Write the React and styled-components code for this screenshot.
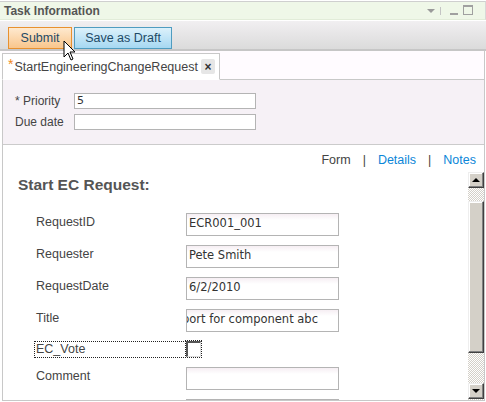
import React from 'react'
import styled, { createGlobalStyle } from 'styled-components';

const GlobalStyle = createGlobalStyle`
    html, body {
        margin: 0;
        padding: 0;
        background: #fff;
    }
    body {
        font-family: "Liberation Sans", Arial, sans-serif;
        font-size: 12px;
        color: #444;
    }
`;

const Portlet = styled.div`
    position: relative;
    width: 486px;
    height: 402px;
    overflow: hidden;
    padding-top: 1px;
    box-sizing: border-box;
`;

const TitleBar = styled.div`
    height: 19px;
    box-sizing: border-box;
    border-top: 1px solid #cfcfcf;
    border-right: 1px solid #d8d8d8;
    border-bottom: 1px solid #e2ecd9;
    background: #eff7e8;
    display: flex;
    align-items: center;
    padding: 0 12px 0 4px;
    margin-bottom: 1px;
`;

const Title = styled.div`
    flex: 1;
    font-weight: bold;
    color: #555;
    font-size: 12px;
`;

const WinIcons = styled.div`
    display: flex;
    align-items: center;
    gap: 5px;
`;

const Caret = styled.span`
    width: 0;
    height: 0;
    border-left: 4px solid transparent;
    border-right: 4px solid transparent;
    border-top: 4px solid #9a9a9a;
`;

const Sep = styled.span`
    width: 1px;
    height: 8px;
    background: #c4c4c4;
    margin-right: 4px;
`;

const MinIcon = styled.span`
    width: 8px;
    height: 2px;
    background: #a0a0a0;
    margin-top: 7px;
`;

const MaxIcon = styled.span`
    width: 8px;
    height: 7px;
    border: 1px solid #a0a0a0;
    border-top-width: 2px;
    margin-bottom: 2px;
`;

const Toolbar = styled.div`
    height: 30px;
    box-sizing: border-box;
    background: linear-gradient(#f1eff1, #dbdbdb);
    border-bottom: 2px solid #c6c6c6;
    display: flex;
    align-items: flex-end;
    gap: 2px;
    padding-left: 8px;
`;

const Button = styled.button`
    height: 22px;
    box-sizing: border-box;
    padding: 0;
    white-space: nowrap;
    font-family: "Liberation Sans", Arial, sans-serif;
    font-size: 12.5px;
    color: #1e4a66;
    border: 1px solid ${p => p.$tone === 'orange' ? '#e8912f' : '#4f9cc0'};
    background: ${p => p.$tone === 'orange'
        ? 'linear-gradient(#fee9cf, #f9c68c)'
        : 'linear-gradient(#dcf1fb, #a6d8f2)'};
    width: ${p => p.$w}px;
    cursor: default;
`;

const Frame = styled.div`
    margin-left: 2px;
    border-left: 1px solid #c8c8c8;
    border-right: 1px solid #c8c8c8;
    width: 483px;
    box-sizing: border-box;
`;

const TabStrip = styled.div`
    height: 29px;
    box-sizing: border-box;
    background: #fffbff;
    border-bottom: 1px solid #c8c8c8;
    display: flex;
    align-items: flex-end;
    margin-left: -1px;
`;

const Tab = styled.div`
    height: 27px;
    box-sizing: border-box;
    width: 218px;
    margin-bottom: -1px;
    background: #fff;
    border: 1px solid #c8c8c8;
    border-bottom: 1px solid #fff;
    display: flex;
    align-items: center;
    padding-left: 5px;
    font-size: 12.5px;
    color: #444;
`;

const Star = styled.span`
    color: #f08a1c;
    font-size: 14px;
    align-self: flex-start;
    margin-top: 2px;
    margin-right: 1px;
`;

const CloseBox = styled.span`
    width: 14px;
    height: 15px;
    margin-left: 3px;
    background: #e6e6e6;
    border-radius: 2px;
    display: flex;
    align-items: center;
    justify-content: center;
    color: #333;
    font-weight: bold;
    font-size: 12px;
`;

const HeaderForm = styled.div`
    background: #f6f1f6;
    border-bottom: 1px solid #cbcbcb;
    padding: 13px 0 14px 12px;
    display: grid;
    grid-template-columns: 59px 182px;
    row-gap: 5px;
    align-items: center;
`;

const SmallLabel = styled.div`
    font-size: 12px;
    color: #444;
`;

const SmallInput = styled.div`
    height: 16px;
    box-sizing: border-box;
    border: 1px solid #b4b4b4;
    background: #fff;
    font-family: "DejaVu Sans", Verdana, sans-serif;
    font-size: 11px;
    line-height: 14px;
    padding-left: 2px;
    color: #333;
`;

const Content = styled.div`
    background: #fff;
    border-bottom: 1px solid #c8c8c8;
`;

const NavRow = styled.div`
    height: 27px;
    display: flex;
    justify-content: flex-end;
    align-items: center;
    gap: 12px;
    padding-right: 8px;
    padding-top: 2px;
    box-sizing: border-box;
    font-size: 12.5px;
`;

const NavItem = styled.span`
    color: ${p => p.$active ? '#444' : '#0b86d8'};
`;

const ScrollArea = styled.div`
    height: 228px;
    display: flex;
`;

const ScrollContent = styled.div`
    flex: 1;
    overflow: hidden;
    padding: 4px 0 0 15px;
`;

const Heading = styled.div`
    font-weight: bold;
    font-size: 15.5px;
    color: #555;
    margin-bottom: 19px;
`;

const FormGrid = styled.div`
    display: grid;
    grid-template-columns: 151px 153px;
    row-gap: 9px;
    padding-left: 17px;
`;

const Label = styled.div`
    font-size: 12.5px;
    color: #444;
    padding-top: 2px;
    padding-left: 1px;
    ${p => p.$focused && `
        outline: 1px dotted #222;
        outline-offset: -1px;
        padding-top: 1px;
        height: 17px;
        box-sizing: border-box;
        margin-left: -1px;
        padding-left: 2px;
    `}
`;

const Field = styled.div`
    height: 23px;
    box-sizing: border-box;
    border: 1px solid #b4b4b4;
    background: linear-gradient(#f6eef3, #fff 6px);
    font-family: "DejaVu Sans", Verdana, sans-serif;
    font-size: 11.5px;
    color: #333;
    padding: 0 2px;
    line-height: 19px;
    display: flex;
    white-space: nowrap;
    overflow: hidden;
    justify-content: ${p => p.$end ? 'flex-end' : 'flex-start'};
    padding-right: ${p => p.$end ? '20px' : '2px'};
`;

const CheckBox = styled.div`
    width: 15px;
    height: 16px;
    box-sizing: border-box;
    border: 2px solid #555;
    border-right: 1px solid #ddd;
    border-bottom: 1px solid #ddd;
    background: #fff;
    outline: 1px dotted #222;
`;

const Scrollbar = styled.div`
    width: 16px;
    display: flex;
    flex-direction: column;
    background-color: #eeeae6;
    background-image: conic-gradient(#d4d0c8 25%, #fff 0 50%, #d4d0c8 0 75%, #fff 0);
    background-size: 2px 2px;
`;

const Bevel = styled.div`
    box-sizing: border-box;
    background: #d4d0c8;
    border: 1px solid;
    border-color: #eee #404040 #404040 #eee;
    box-shadow: inset -1px -1px #808080, inset 1px 1px #fff;
`;

const ArrowBtn = styled(Bevel)`
    height: 16px;
    display: flex;
    align-items: center;
    justify-content: center;
`;

const Thumb = styled(Bevel)`
    height: 152px;
    margin: 13px 0 30px;
`;

const Tri = styled.span`
    width: 0;
    height: 0;
    border-left: 4px solid transparent;
    border-right: 4px solid transparent;
    ${p => p.$down ? 'border-top: 4px solid #000;' : 'border-bottom: 4px solid #000;'}
`;

const Pointer = styled.svg`
    position: absolute;
    left: 63px;
    top: 40px;
`;

const rows = [
    { label: 'RequestID', value: 'ECR001_001' },
    { label: 'Requester', value: 'Pete Smith' },
    { label: 'RequestDate', value: '6/2/2010' },
    { label: 'Title', value: 'Report for component abc', end: true },
];

export default function App() {
    return (
        <Portlet>
            <GlobalStyle />
            <TitleBar>
                <Title>Task Information</Title>
                <WinIcons>
                    <Caret />
                    <Sep />
                    <MinIcon />
                    <MaxIcon />
                </WinIcons>
            </TitleBar>
            <Toolbar>
                <Button $tone="orange" $w={64}>Submit</Button>
                <Button $tone="blue" $w={98}>Save as Draft</Button>
            </Toolbar>
            <Frame>
                <TabStrip>
                    <Tab>
                        <Star>*</Star>
                        StartEngineeringChangeRequest
                        <CloseBox>×</CloseBox>
                    </Tab>
                </TabStrip>
                <HeaderForm>
                    <SmallLabel>* Priority</SmallLabel>
                    <SmallInput>5</SmallInput>
                    <SmallLabel>Due date</SmallLabel>
                    <SmallInput />
                </HeaderForm>
                <Content>
                    <NavRow>
                        <NavItem $active>Form</NavItem>
                        <NavItem $active>|</NavItem>
                        <NavItem>Details</NavItem>
                        <NavItem $active>|</NavItem>
                        <NavItem>Notes</NavItem>
                    </NavRow>
                    <ScrollArea>
                        <ScrollContent>
                            <Heading>Start EC Request:</Heading>
                            <FormGrid>
                                {rows.map(r => (
                                    <React.Fragment key={r.label}>
                                        <Label>{r.label}</Label>
                                        <Field $end={r.end}>{r.value}</Field>
                                    </React.Fragment>
                                ))}
                                <Label $focused>EC_Vote</Label>
                                <CheckBox />
                                <Label>Comment</Label>
                                <Field />
                                <Label />
                                <Field />
                            </FormGrid>
                        </ScrollContent>
                        <Scrollbar>
                            <ArrowBtn><Tri /></ArrowBtn>
                            <Thumb />
                            <ArrowBtn><Tri $down /></ArrowBtn>
                        </Scrollbar>
                    </ScrollArea>
                </Content>
            </Frame>
            <Pointer width="14" height="22" viewBox="0 0 14 22">
                <path d="M1 1 L1 17 L5 13 L8 20 L10 19 L7 12 L12 12 Z" fill="#fff" stroke="#000" strokeWidth="1" strokeLinejoin="miter" />
            </Pointer>
        </Portlet>
    )
}
